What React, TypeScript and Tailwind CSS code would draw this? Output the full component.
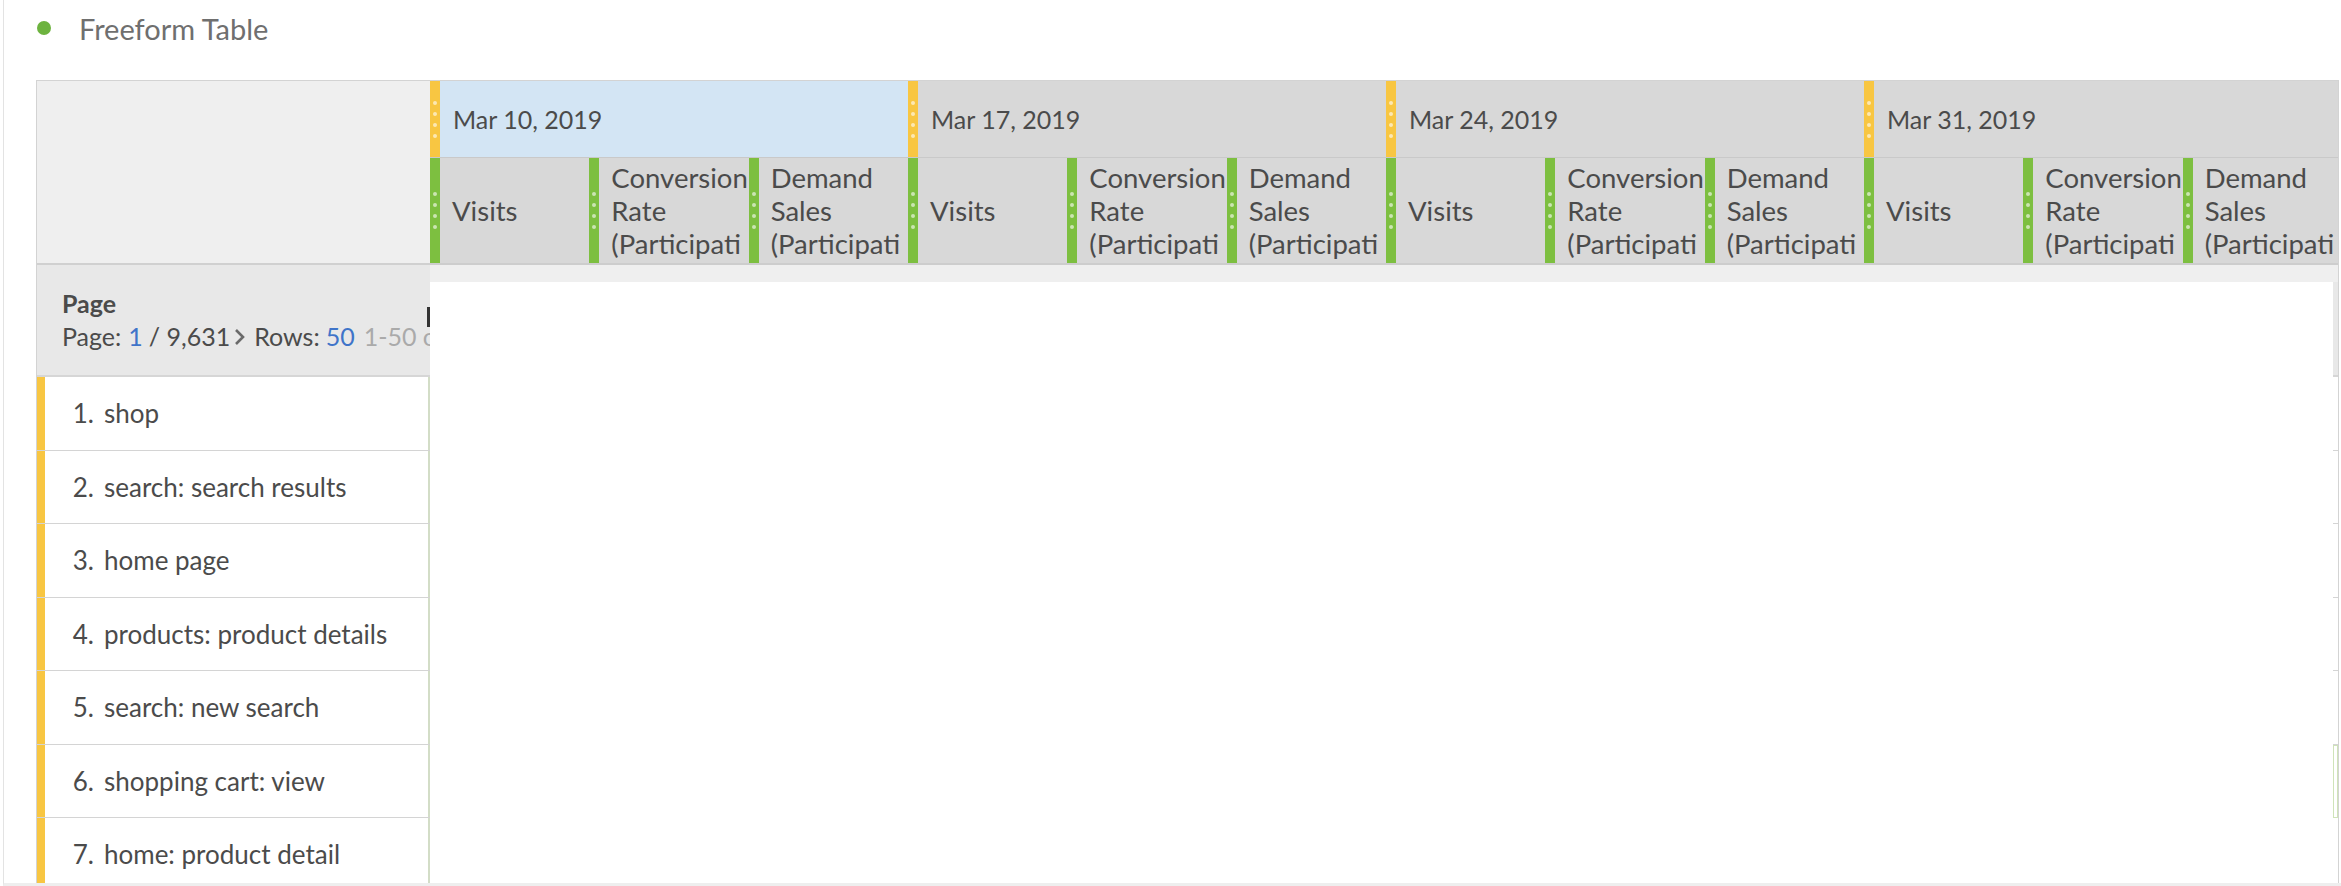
import React from "react";

const groups = ["Mar 10, 2019", "Mar 17, 2019", "Mar 24, 2019", "Mar 31, 2019"];
const metrics: string[][] = [
  ["Visits"],
  ["Conversion", "Rate", "(Participati"],
  ["Demand", "Sales", "(Participati"],
];
const rows = [
  "shop",
  "search: search results",
  "home page",
  "products: product details",
  "search: new search",
  "shopping cart: view",
  "home: product detail",
];

function Dots() {
  return (
    <div className="flex flex-col gap-[7px]">
      {[0, 1, 2, 3].map((i) => (
        <span key={i} className="block w-[4px] h-[4px] rounded-full bg-white/60" />
      ))}
    </div>
  );
}

function Strip({ yellow }: { yellow?: boolean }) {
  return (
    <div
      className={
        yellow
          ? "w-[10px] shrink-0 bg-[#f8c642] flex items-center justify-center"
          : "w-[10px] shrink-0 bg-[#7dbf40] flex items-center justify-center"
      }
    >
      <Dots />
    </div>
  );
}

export default function App() {
  return (
    <div className="w-[2341px] h-[886px] overflow-hidden bg-white pl-[3px] font-['Lato','Open_Sans',sans-serif] text-[#4b4b4b]">
      <div className="h-[886px] border-l border-[#e3e3e3] border-b-[3px] border-b-[#eeeeee] overflow-hidden">
        {/* Title */}
        <div className="flex items-center h-[56px] pl-[33px] gap-[28px]">
          <span className="block w-[14px] h-[14px] rounded-full bg-[#6db33f]" />
          <span className="text-[29px] leading-none text-[#6f6f6f]">Freeform Table</span>
        </div>

        {/* Table */}
        <div className="mt-[24px] ml-[32px] w-[2303px] border-t border-l border-r border-[#d3d3d3] overflow-hidden">
          {/* Header */}
          <div className="flex">
            <div className="w-[393px] shrink-0 h-[184px] bg-[#efefef] border-b-2 border-[#d0d0d0]" />
            <div className="flex">
              {groups.map((g, gi) => (
                <div key={g} className="w-[478px] shrink-0 flex flex-col">
                  <div
                    className={
                      gi === 0
                        ? "h-[77px] flex border-b border-[#c9c9c9] bg-[#d3e5f4]"
                        : "h-[77px] flex border-b border-[#c9c9c9] bg-[#d8d8d8]"
                    }
                  >
                    <Strip yellow />
                    <div className="pl-[13px] flex items-center text-[25px] leading-none whitespace-nowrap">
                      {g}
                    </div>
                  </div>
                  <div className="h-[107px] flex border-b-2 border-[#cdcdcd] bg-[#d8d8d8]">
                    {metrics.map((m, mi) => (
                      <div key={mi} className="w-[159.33px] shrink-0 flex">
                        <Strip />
                        <div className="flex-1 min-w-0 overflow-hidden pl-[12px] flex flex-col justify-center text-[27.5px] leading-[33px] whitespace-nowrap">
                          {m.map((line) => (
                            <span key={line}>{line}</span>
                          ))}
                        </div>
                      </div>
                    ))}
                  </div>
                </div>
              ))}
            </div>
          </div>

          {/* Body */}
          <div className="flex">
            <div className="w-[393px] shrink-0 flex flex-col">
              <div className="relative h-[112px] bg-[#e8e8e8] border-b-2 border-[#d6d6d6] pl-[25px] flex flex-col justify-center overflow-hidden whitespace-nowrap text-[25px] leading-[33px]">
                <span className="font-bold">Page</span>
                <div className="flex items-center">
                  <span>Page:</span>
                  <span className="ml-[7px] text-[#3f74c9]">1</span>
                  <span className="ml-[6px]">/ 9,631</span>
                  <svg className="ml-[4px] shrink-0" width="11" height="18" viewBox="0 0 11 18">
                    <path d="M2 2 L9 9 L2 16" fill="none" stroke="#6a6a6a" strokeWidth="2.6" />
                  </svg>
                  <span className="ml-[9px]">Rows:</span>
                  <span className="ml-[6px] text-[#3f74c9]">50</span>
                  <span className="ml-[9px] text-[#aaaaaa]">1-50 of 9,631</span>
                </div>
                <span className="absolute right-0 top-[42px] w-[3px] h-[20px] bg-[#333333]" />
              </div>
              {rows.map((r, i) => (
                <div key={r} className="h-[73.5px] shrink-0 flex border-b border-[#d4d4d4]">
                  <div className="w-[8px] shrink-0 bg-[#f8c642]" />
                  <div className="flex-1 flex items-center bg-white border-r-2 border-[#d3ddc7] text-[26px] leading-none whitespace-nowrap">
                    <span className="w-[49px] text-right">{i + 1}.</span>
                    <span className="ml-[10px]">{r}</span>
                  </div>
                </div>
              ))}
            </div>

            <div className="flex-1 flex flex-col bg-[#efefef]">
              <div className="h-[17px] shrink-0" />
              <div className="flex flex-1">
                <div className="flex-1 bg-white" />
                <div className="w-[5px] shrink-0 flex flex-col bg-white">
                  <div className="h-[95px] shrink-0 bg-[#e8e8e8] border-b-2 border-[#d6d6d6]" />
                  {rows.map((r, i) => (
                    <div
                      key={r}
                      className={
                        i === 5
                          ? "h-[73.5px] shrink-0 border border-[#cfe3b9]"
                          : "h-[73.5px] shrink-0 border-b border-[#d4d4d4]"
                      }
                    />
                  ))}
                </div>
              </div>
            </div>
          </div>
        </div>
      </div>
    </div>
  );
}
